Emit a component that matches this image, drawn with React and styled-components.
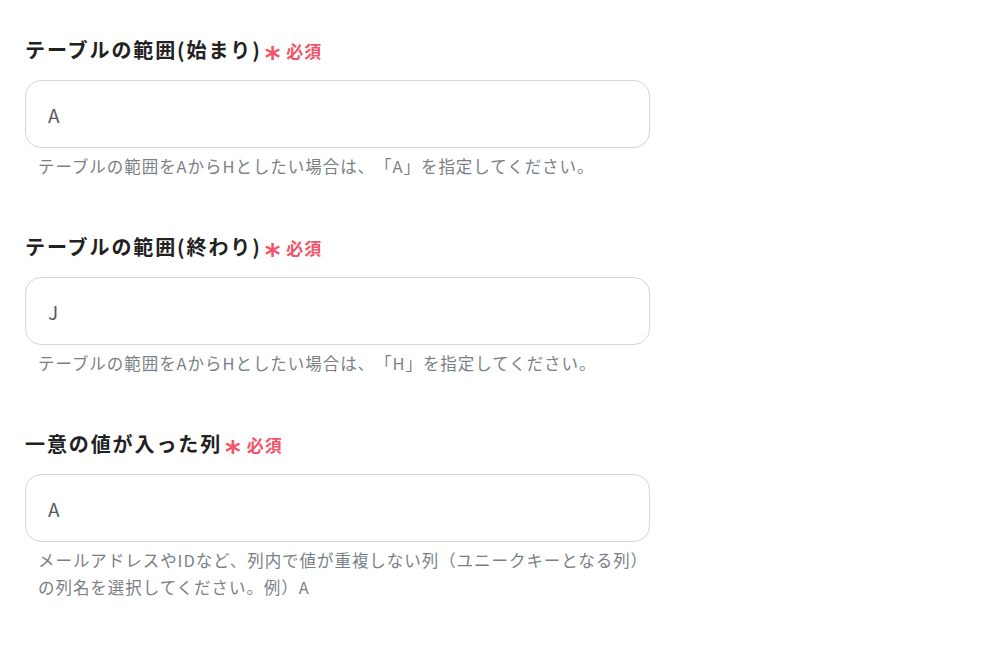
import React from "react";
import styled, { createGlobalStyle } from "styled-components";

const GlobalStyle = createGlobalStyle`
    body {
        margin: 0;
        background: #ffffff;
        font-family: "Noto Sans CJK JP", "Noto Sans", sans-serif;
    }
`;

const Form = styled.div`
    padding: 38px 25px 0 25px;
    display: flex;
    flex-direction: column;
    gap: 55px;
`;

const Field = styled.div`
    display: flex;
    flex-direction: column;
    width: 625px;
`;

const Label = styled.div`
    display: flex;
    align-items: center;
    height: 24px;
    font-size: 20px;
    letter-spacing: 1.9px;
    line-height: 24px;
    font-weight: 700;
    color: #222222;
    margin-bottom: 18px;
    text-spacing-trim: space-all;
`;

const Asterisk = styled.span`
    color: #f2546a;
    font-family: "DejaVu Sans", sans-serif;
    font-size: 30px;
    line-height: 24px;
    font-weight: 700;
    margin-left: 3px;
    position: relative;
    top: 8px;
`;

const Required = styled.span`
    color: #f2546a;
    font-size: 17px;
    line-height: 24px;
    letter-spacing: 1px;
    font-weight: 700;
    margin-left: 4px;
    position: relative;
    top: 1px;
`;

const Input = styled.input`
    box-sizing: border-box;
    width: 100%;
    height: 68px;
    border: 1px solid #d2d6dc;
    border-radius: 16px;
    padding: 0 22px;
    font-family: "Noto Sans CJK JP", "Noto Sans", sans-serif;
    font-size: 19px;
    color: #555b63;
    outline: none;
    background: #ffffff;
`;

const Help = styled.div`
    margin-top: 5px;
    padding-left: 13px;
    font-size: 16.5px;
    letter-spacing: 0.95px;
    line-height: 27px;
    color: #7a7f86;
    text-spacing-trim: space-all;
`;

const fields = [
    {
        label: "テーブルの範囲(始まり)",
        value: "A",
        help: "テーブルの範囲をAからHとしたい場合は、「A」を指定してください。",
    },
    {
        label: "テーブルの範囲(終わり)",
        value: "J",
        help: "テーブルの範囲をAからHとしたい場合は、「H」を指定してください。",
    },
    {
        label: "一意の値が入った列",
        value: "A",
        help: "メールアドレスやIDなど、列内で値が重複しない列（ユニークキーとなる列）の列名を選択してください。例）A",
    },
];

const App = () => {
    return (
        <>
            <GlobalStyle />
            <Form>
                {fields.map((f, i) => (
                    <Field key={i}>
                        <Label>
                            {f.label}
                            <Asterisk>*</Asterisk>
                            <Required>必須</Required>
                        </Label>
                        <Input defaultValue={f.value} readOnly />
                        <Help>{f.help}</Help>
                    </Field>
                ))}
            </Form>
        </>
    );
};

export default App;
